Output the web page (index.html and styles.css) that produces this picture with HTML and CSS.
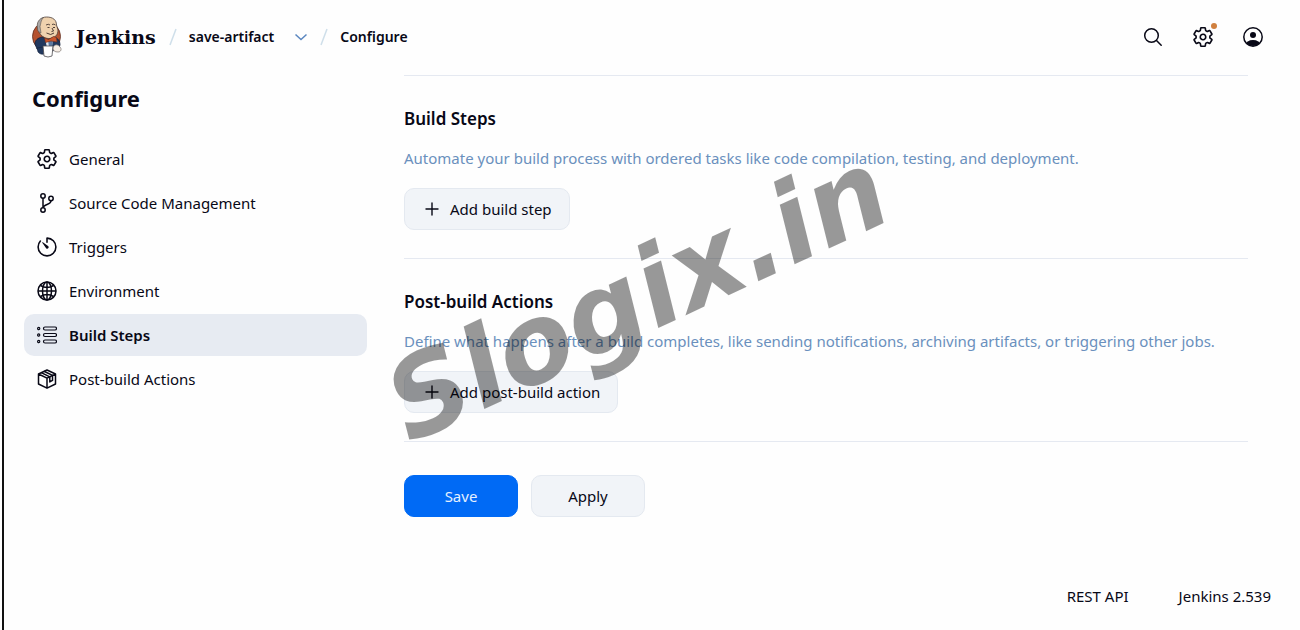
FILE: index.html
```
<!DOCTYPE html>
<html lang="en">

<head>
  <meta charset="UTF-8">
  <meta name="viewport" content="width=device-width, initial-scale=1.0">
  <title>save-artifact Config - Jenkins</title>
  <link rel="stylesheet" href="styles.css">
</head>

<body>
  <svg class="defs" aria-hidden="true">
    <symbol id="gear" viewBox="0 0 512 512">
      <path fill="none" stroke="currentColor" stroke-width="38" stroke-linecap="round" stroke-linejoin="round"
        d="M262.29 192.31a64 64 0 1057.4 57.4 64.13 64.13 0 00-57.4-57.4zM416.39 256a154.34 154.34 0 01-1.53 20.79l45.21 35.46a10.81 10.81 0 012.45 13.75l-42.77 74a10.81 10.81 0 01-13.14 4.59l-44.9-18.08a16.11 16.11 0 00-15.17 1.75A164.48 164.48 0 01325 400.8a15.94 15.94 0 00-8.82 12.14l-6.73 47.89a11.08 11.08 0 01-10.68 9.17h-85.54a11.11 11.11 0 01-10.69-8.87l-6.72-47.82a16.07 16.07 0 00-9-12.22 155.3 155.3 0 01-21.46-12.57 16 16 0 00-15.11-1.71l-44.89 18.07a10.81 10.81 0 01-13.14-4.58l-42.77-74a10.8 10.8 0 012.45-13.75l38.21-30a16.05 16.05 0 006-14.08c-.36-4.17-.58-8.33-.58-12.5s.21-8.27.58-12.35a16 16 0 00-6.07-13.94l-38.19-30A10.81 10.81 0 0149.48 186l42.77-74a10.81 10.81 0 0113.14-4.59l44.9 18.08a16.11 16.11 0 0015.17-1.75A164.48 164.48 0 01187 111.2a15.94 15.94 0 008.82-12.14l6.73-47.89A11.08 11.08 0 01213.23 42h85.54a11.11 11.11 0 0110.69 8.87l6.72 47.82a16.07 16.07 0 009 12.22 155.3 155.3 0 0121.46 12.57 16 16 0 0015.11 1.71l44.89-18.07a10.81 10.81 0 0113.14 4.58l42.77 74a10.8 10.8 0 01-2.45 13.75l-38.21 30a16.05 16.05 0 00-6.05 14.08c.33 4.14.55 8.3.55 12.47z" />
    </symbol>
    <symbol id="plus" viewBox="0 0 14 14">
      <path fill="none" stroke="currentColor" stroke-width="1.4" stroke-linecap="round" d="M7 1v12M1 7h12" />
    </symbol>
  </svg>

  <div class="page">
    <header class="header">
      <a class="brand" href="#">
        <svg class="logo" viewBox="0 0 30 42">
          <ellipse cx="14.500" cy="20.500" rx="14" ry="14.500" fill="#b5522f" stroke="#5d2f22" stroke-width=".8" />
          <path d="M5.500 12C5 5 9 1 14.500 1 21 1 24.500 4 24.500 9l1.500 5c0 5-3 8-8 8.500-5 .5-11-3-12.500-10.500z" fill="#efd2ae" stroke="#4a3b36" stroke-width=".8" />
          <path d="M5.500 12c-1-5 1-9 6-10.500-3 3-2.500 6-3.500 9l1 6.500c-3-1-3.500-3-3.500-5z" fill="#aaa7a6" stroke="#5d544e" stroke-width=".6" />
          <path d="M14 9q2.500-1.500 4 0M20 8.500q2-1 3.500.5" fill="none" stroke="#4a3b36" stroke-width=".9" />
          <path d="M15.500 11.500h2M21 11.500h2M20 12l1.500 3-2 .5M14.500 17q4.500 3 7.500 0" fill="none" stroke="#3c2c28" stroke-width=".9" />
          <path d="M3 28c0-4 3-6 7-7l6 3 6-3c4 1 6 4 6 8l-2 5-15 2-6-3z" fill="#21385e" stroke="#14213b" stroke-width=".8" />
          <path d="M13 22l3 4 5-3-1 8-5 1z" fill="#dfe7f0" />
          <path d="M16 24l1 7 3-1 1-6z" fill="#5c789f" />
          <path d="M12.500 22l4 1.500 5-3 3 1 .5 4.500-6-1-5.500 1.500z" fill="#c9552c" stroke="#6d2d1d" stroke-width=".6" />
          <path d="M5 32l6-1 1 7c-3 1-5-1-6-2z" fill="#21385e" stroke="#14213b" stroke-width=".6" />
          <path d="M11 30h10l-1 10q-4 2-8 0z" fill="#fff" stroke="#4d4b50" stroke-width=".8" />
          <path d="M21 32c1-4 5-4 7-1 2 2 1 5-2 5s-5-1-5-4z" fill="#f7eee5" stroke="#77706d" stroke-width=".7" />
        </svg>
        <span>Jenkins</span>
      </a>
      <nav class="crumbs" aria-label="Breadcrumb">
        <svg class="slash" viewBox="0 0 8 18"><path d="M7 1L1 17" /></svg>
        <a class="job" href="#">save-artifact</a>
        <button class="chevron" type="button" aria-label="Job menu">
          <svg viewBox="0 0 14 8"><path d="M1.500 1.500L7 6.500l5.500-5" /></svg>
        </button>
        <svg class="slash" viewBox="0 0 8 18"><path d="M7 1L1 17" /></svg>
        <a class="current" href="#">Configure</a>
      </nav>
      <div class="tools">
        <button type="button" aria-label="Search">
          <svg class="icon" viewBox="0 0 20 20" fill="none" stroke="currentColor" stroke-width="1.500" stroke-linecap="round">
            <circle cx="8.500" cy="8.500" r="6.800" />
            <path d="M13.500 13.500l4.700 4.700" />
          </svg>
        </button>
        <button type="button" aria-label="Manage Jenkins">
          <svg class="icon gear"><use href="#gear" /></svg>
          <span class="dot"></span>
        </button>
        <button type="button" aria-label="Account">
          <svg class="icon" viewBox="0 0 20 20">
            <clipPath id="face"><circle cx="10" cy="10" r="9" /></clipPath>
            <circle cx="10" cy="10" r="9.200" fill="none" stroke="currentColor" stroke-width="1.500" />
            <circle cx="10" cy="8" r="3" fill="currentColor" />
            <ellipse cx="10" cy="18" rx="7.500" ry="5" fill="currentColor" clip-path="url(#face)" />
          </svg>
        </button>
      </div>
    </header>

    <div class="content">
      <aside class="sidebar">
        <h1>Configure</h1>
        <nav class="tasks">
          <a class="task" href="#">
            <svg class="icon gear"><use href="#gear" /></svg>
            General
          </a>
          <a class="task" href="#">
            <svg class="icon" viewBox="0 0 20 20" fill="none" stroke="currentColor" stroke-width="1.500">
              <circle cx="6" cy="3" r="2.200" />
              <circle cx="6" cy="17" r="2.200" />
              <circle cx="14" cy="5.500" r="2.200" />
              <path d="M6 5.200v9.600M14 7.700c0 4.500-7 3-8 7" />
            </svg>
            Source Code Management
          </a>
          <a class="task" href="#">
            <svg class="icon" viewBox="40 40 432 432">
              <path fill="none" stroke="currentColor" stroke-width="34" stroke-linecap="round" stroke-linejoin="round"
                d="M112.91 128A191.85 191.85 0 0064 254c-1.18 106.35 85.65 193.8 192 194 106.2.2 192-85.83 192-192 0-104.54-83.55-189.61-187.5-192a4.36 4.36 0 00-4.5 4.37V152" />
              <path fill="currentColor"
                d="M233.38 278.63l-79-113a8.13 8.13 0 0111.32-11.32l113 79a32.5 32.5 0 01-37.25 53.26 33.21 33.21 0 01-8.07-7.94z" />
            </svg>
            Triggers
          </a>
          <a class="task" href="#">
            <svg class="icon" viewBox="0 0 20 20" fill="none" stroke="currentColor" stroke-width="1.500">
              <circle cx="10" cy="10" r="9" />
              <ellipse cx="10" cy="10" rx="4.500" ry="9" />
              <path d="M10 1v18M1 10h18M3.500 4.500c4 2.500 9 2.500 13 0M3.500 15.500c4-2.500 9-2.500 13 0" />
            </svg>
            Environment
          </a>
          <a class="task active" href="#" aria-current="page">
            <svg class="icon" viewBox="0 0 20 20" fill="none" stroke="currentColor" stroke-width="1.200">
              <circle cx="1.700" cy="3.500" r="1.100" />
              <circle cx="1.700" cy="10" r="1.100" />
              <circle cx="1.700" cy="16.500" r="1.100" />
              <rect x="6.500" y="2" width="13" height="3" rx="1.500" />
              <rect x="6.500" y="8.500" width="13" height="3" rx="1.500" />
              <rect x="6.500" y="15" width="13" height="3" rx="1.500" />
            </svg>
            Build Steps
          </a>
          <a class="task" href="#">
            <svg class="icon" viewBox="0 0 20 20" fill="none" stroke="currentColor" stroke-width="1.500" stroke-linejoin="round">
              <path d="M10 1l8.500 4v10L10 19.200 1.500 15V5zM1.500 5L10 9.200 18.500 5M10 9.200v10" />
              <path d="M4.300 3.700l8.500 4.200v5l2.700-1.500v-5L7 2.300" />
            </svg>
            Post-build Actions
          </a>
        </nav>
      </aside>

      <main>
        <section>
          <h2>Build Steps</h2>
          <p>Automate your build process with ordered tasks like code compilation, testing, and deployment.</p>
          <button class="button add" type="button"><svg><use href="#plus" /></svg>Add build step</button>
        </section>
        <section>
          <h2>Post-build Actions</h2>
          <p>Define what happens after a build completes, like sending notifications, archiving artifacts, or triggering other jobs.</p>
          <button class="button add" type="button"><svg><use href="#plus" /></svg>Add post-build action</button>
        </section>
        <div class="actions">
          <button class="button primary" type="submit">Save</button>
          <button class="button" type="button">Apply</button>
        </div>
      </main>
    </div>

    <footer class="footer">
      <a href="#">REST API</a>
      <a href="#">Jenkins 2.539</a>
    </footer>
  </div>

  <div class="watermark" aria-hidden="true">Slogix.in</div>
</body>

</html>
```
FILE: styles.css
```
* {
  box-sizing: border-box;
}

body {
  margin: 0;
  position: relative;
  overflow-x: hidden;
  background-color: #fefefe;
  color: #080816;
  font-family: "Noto Sans", "Open Sans", sans-serif;
  font-size: 15px;
  line-height: 24px;
}

a {
  color: inherit;
  text-decoration: none;
}

button {
  font: inherit;
  color: inherit;
  cursor: pointer;
}

h1,
h2,
p {
  margin: 0;
}

.defs {
  display: none;
}

.page {
  display: flex;
  flex-direction: column;
  min-height: 100vh;
  margin-left: 2px;
  border-left: 2px solid #111;
}

.icon {
  display: block;
  flex: none;
  width: 20px;
  height: 20px;
}

.icon.gear {
  width: 22px;
  height: 22px;
  margin: -1px;
}

/* header */
.header {
  display: flex;
  align-items: center;
  height: 75px;
  padding: 0 37px 2px 28px;
}

.brand {
  display: flex;
  align-items: center;
  gap: 14px;
  font-family: "DejaVu Serif", serif;
  font-size: 19px;
  font-weight: 700;
}

.logo {
  width: 30px;
  height: 42px;
}

.crumbs {
  display: flex;
  align-items: center;
  margin-left: 13px;
  font-size: 14px;
  font-weight: 600;
}

.slash {
  width: 8px;
  height: 18px;
  fill: none;
  stroke: #cfdfea;
  stroke-width: 1.5;
}

.job {
  margin: 0 20px 0 12px;
}

.current {
  margin-left: 12px;
}

.chevron {
  display: flex;
  margin-right: 12px;
  padding: 0;
  border: 0;
  background: none;
}

.chevron svg {
  width: 14px;
  height: 8px;
  fill: none;
  stroke: #5b87c0;
  stroke-width: 1.5;
}

.tools {
  display: flex;
  gap: 30px;
  margin-left: auto;
}

.tools button {
  position: relative;
  padding: 0;
  border: 0;
  background: none;
}

.dot {
  position: absolute;
  top: -4px;
  right: -4px;
  width: 6px;
  height: 6px;
  border-radius: 50%;
  background-color: #d0803f;
}

/* side panel */
.content {
  display: flex;
  flex: 1;
  gap: 37px;
  padding: 0 52px 0 20px;
}

.sidebar {
  flex: none;
  width: 343px;
}

.sidebar h1 {
  margin: 7px 0 24px 8px;
  font-size: 22px;
  font-weight: 700;
  line-height: 32px;
}

.tasks {
  display: flex;
  flex-direction: column;
  gap: 2px;
}

.task {
  display: flex;
  align-items: center;
  gap: 12px;
  height: 42px;
  padding: 0 13px;
  border-radius: 10px;
}

.task.active {
  background-color: #e7ebf2;
  font-weight: 600;
}

/* form */
main {
  flex: 1;
}

section {
  padding: 31px 0 28px;
  border-top: 1px solid #e5e9f1;
}

h2 {
  font-size: 17px;
  font-weight: 600;
  line-height: 24px;
}

section p {
  margin: 15px 0 18px;
  color: #6a90bd;
}

.button {
  display: flex;
  align-items: center;
  justify-content: center;
  height: 42px;
  min-width: 114px;
  padding: 0 17px;
  border: 1px solid #e4e9f0;
  border-radius: 10px;
  background-color: #f1f4f8;
}

.add {
  padding: 0 17px 0 20px;
  gap: 11px;
}

.add svg {
  width: 14px;
  height: 14px;
}

.primary {
  border-color: #006af5;
  background-color: #006af5;
  color: #e4f0ff;
}

.actions {
  display: flex;
  gap: 13px;
  padding-top: 33px;
  border-top: 1px solid #e5e9f1;
}

.footer {
  display: flex;
  justify-content: flex-end;
  gap: 50px;
  padding: 20px 29px 22px;
}

/* stamped across the page */
.watermark {
  position: absolute;
  top: 47%;
  left: 49%;
  transform: translate(-50%, -50%) rotate(-25deg);
  color: rgba(0, 0, 0, .4);
  font: italic 700 110px/1 "DejaVu Sans", sans-serif;
  white-space: nowrap;
  pointer-events: none;
}
```
